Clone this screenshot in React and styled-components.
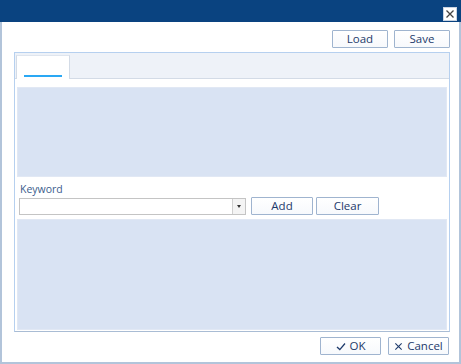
import React from 'react'
import styled, { createGlobalStyle } from 'styled-components'

const Global = createGlobalStyle`
  html, body { margin: 0; padding: 0; background: #ffffff; }
  body { font-family: "Open Sans", "Noto Sans", "Liberation Sans", sans-serif; }
`

const Window = styled.div`
  width: 461px;
  height: 364px;
  box-sizing: border-box;
  display: flex;
  flex-direction: column;
  background: #ffffff;
  border-left: 2px solid #b2c4da;
  border-right: 2px solid #b2c4da;
  border-bottom: 2px solid #b2c4da;
`

const TitleBar = styled.div`
  height: 22px;
  margin: 0 -2px;
  background: #0a4380;
  border-top: 1px solid #0a4380;
  box-sizing: border-box;
  display: flex;
  justify-content: flex-end;
  align-items: flex-end;
  padding: 0 4px 1px 0;
`

const CloseBox = styled.div`
  width: 14px;
  height: 14px;
  background: #ffffff;
  border: 1px solid #c9d4e2;
  box-sizing: border-box;
  display: flex;
  align-items: center;
  justify-content: center;
`

const Toolbar = styled.div`
  display: flex;
  justify-content: flex-end;
  gap: 6px;
  padding: 8px 9px 0 0;
`

const Button = styled.button`
  width: ${p => p.$w || 56}px;
  height: 18px;
  box-sizing: border-box;
  padding: 0;
  background: linear-gradient(#ffffff, #f7f9fc);
  border: 1px solid #9fb4cf;
  border-radius: 1px;
  color: #1d3a6b;
  font-family: "Open Sans", "Noto Sans", "Liberation Sans", sans-serif;
  font-size: 11.5px;
  line-height: 16px;
  display: flex;
  align-items: center;
  justify-content: center;
  gap: 4px;
`

const TabPanel = styled.div`
  margin: 4px 9px 0 12px;
  height: 280px;
  box-sizing: border-box;
  border: 1px solid #b6d0ef;
  border-bottom-color: #a9bcd4;
  display: flex;
  flex-direction: column;
`

const TabHeader = styled.div`
  height: 26px;
  flex-shrink: 0;
  display: flex;
  background: #eef2f8;
  border-bottom: 1px solid #d3dbe6;
  box-sizing: border-box;
  padding-top: 2px;
`

const Tab = styled.div`
  width: 54px;
  margin-left: 1px;
  height: 24px;
  margin-bottom: -1px;
  background: #ffffff;
  border: 1px solid #d3dbe6;
  border-bottom: none;
  border-top-color: #dfe5ee;
  box-sizing: border-box;
  display: flex;
  align-items: flex-end;
  padding: 0 0 2px 7px;
`

const Indicator = styled.div`
  width: 38px;
  height: 2px;
  background: #2aa8f4;
`

const Content = styled.div`
  flex: 1;
  display: flex;
  flex-direction: column;
  padding: 8px 2px 0 2px;
`

const Area = styled.div`
  height: ${p => p.$h}px;
  margin-top: ${p => p.$mt || 0}px;
  flex-shrink: 0;
  background: #d9e3f3;
  border: 1px solid #e1e8f4;
  box-sizing: border-box;
`

const Label = styled.div`
  margin: 5px 0 0 3px;
  height: 14px;
  font-size: 10.5px;
  line-height: 14px;
  color: #3b5c8c;
`

const KeywordRow = styled.div`
  display: flex;
  align-items: center;
  margin: 1px 0 0 2px;
  height: 18px;
`

const Combo = styled.div`
  width: 227px;
  height: 17px;
  box-sizing: border-box;
  border: 1px solid #c4c4c4;
  background: #ffffff;
  display: flex;
  justify-content: flex-end;
  margin-right: 5px;
  margin-top: 1px;
`

const ComboArrow = styled.div`
  width: 12px;
  height: 100%;
  background: #f4f4f4;
  border-left: 1px solid #d0d0d0;
  display: flex;
  align-items: center;
  justify-content: center;

  &::after {
    content: '';
    border-left: 2px solid transparent;
    border-right: 2px solid transparent;
    border-top: 3px solid #333333;
  }
`

const RowButtons = styled.div`
  display: flex;
  gap: 3px;
`

const Footer = styled.div`
  display: flex;
  justify-content: flex-end;
  gap: 7px;
  padding: 5px 10px 0 0;
`

function XIcon({ size = 10, color = '#3a3a3a', stroke = 1.4 }) {
  return (
    <svg width={size} height={size} viewBox="0 0 10 10">
      <path d="M1.5 1.5 L8.5 8.5 M8.5 1.5 L1.5 8.5" stroke={color} strokeWidth={stroke} fill="none" />
    </svg>
  )
}

function CheckIcon() {
  return (
    <svg width="10" height="9" viewBox="0 0 10 9">
      <path d="M1 5 L3.8 7.6 L9 1.5" stroke="#1d3a6b" strokeWidth="1.3" fill="none" />
    </svg>
  )
}

export default function App() {
  return (
    <>
      <Global />
      <Window>
        <TitleBar>
          <CloseBox>
            <XIcon size={10} color="#444" stroke={1.3} />
          </CloseBox>
        </TitleBar>
        <Toolbar>
          <Button $w={56}>Load</Button>
          <Button $w={56}>Save</Button>
        </Toolbar>
        <TabPanel>
          <TabHeader>
            <Tab>
              <Indicator />
            </Tab>
          </TabHeader>
          <Content>
            <Area $h={90} />
            <Label>Keyword</Label>
            <KeywordRow>
              <Combo>
                <ComboArrow />
              </Combo>
              <RowButtons>
                <Button $w={62}>Add</Button>
                <Button $w={63}>Clear</Button>
              </RowButtons>
            </KeywordRow>
            <Area $h={111} $mt={4} />
          </Content>
        </TabPanel>
        <Footer>
          <Button $w={61}><CheckIcon />OK</Button>
          <Button $w={61}><XIcon size={9} color="#1d3a6b" stroke={1.2} />Cancel</Button>
        </Footer>
      </Window>
    </>
  )
}
